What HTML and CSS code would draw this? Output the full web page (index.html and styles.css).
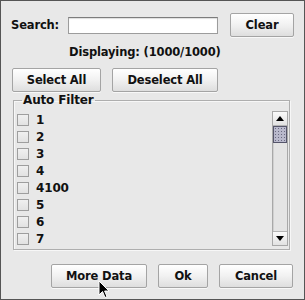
FILE: index.html
```html
<!DOCTYPE html>
<html lang="en">
<head>
    <meta charset="UTF-8">
    <title>Auto Filter</title>
    <link rel="stylesheet" href="styles.css">
</head>
<body>
    <div class="window">
        <div class="search-row">
            <label class="search-label" for="search">Search:</label>
            <input type="text" id="search" class="search-input">
            <button class="btn btn-clear">Clear</button>
        </div>
        <div class="status">Displaying: (1000/1000)</div>
        <div class="select-row">
            <button class="btn btn-select">Select All</button>
            <button class="btn btn-deselect">Deselect All</button>
        </div>
        <fieldset class="group">
            <legend>Auto Filter</legend>
            <div class="group-body">
                <ul class="items">
                    <li><span class="box"></span>1</li>
                    <li><span class="box"></span>2</li>
                    <li><span class="box"></span>3</li>
                    <li><span class="box"></span>4</li>
                    <li><span class="box"></span>4100</li>
                    <li><span class="box"></span>5</li>
                    <li><span class="box"></span>6</li>
                    <li><span class="box"></span>7</li>
                </ul>
                <div class="scrollbar">
                    <div class="arrow arrow-up"></div>
                    <div class="track"><div class="thumb"></div></div>
                    <div class="arrow arrow-down"></div>
                </div>
            </div>
        </fieldset>
        <div class="actions">
            <button class="btn btn-more">More Data</button>
            <button class="btn btn-ok">Ok</button>
            <button class="btn btn-cancel">Cancel</button>
        </div>
        <svg class="cursor" width="12" height="19" viewBox="0 0 12 19">
            <path d="M1 1 L1 15 L4.5 11.5 L7 17.5 L9 16.6 L6.6 11 L11 11 Z" fill="#000" stroke="#fff" stroke-width="1"/>
        </svg>
    </div>
</body>
</html>
```

FILE: styles.css
```css
body {margin: 0; background: #e8e8e8; font-family: "DejaVu Sans", Verdana, sans-serif; font-size: 11.5px; letter-spacing: -0.15px; font-weight: bold; color: #111;}
.window {width: 305px; height: 300px; box-sizing: border-box; border: 1px solid #555; background: #e8e8e8; padding: 12px 10px 0 10px; position: relative;}

.btn {height: 24px; box-sizing: border-box; border: 1px solid #a4a4a4; border-radius: 2px; background: linear-gradient(to bottom, #ffffff, #f1f1f1 50%, #dedede); font: inherit; letter-spacing: inherit; color: #111; padding: 0; box-shadow: 0 1px 0 #f8f8f8;}

.search-row {display: flex; align-items: center; height: 24px;}
.search-label {width: 58px;}
.search-input {width: 150px; height: 17px; box-sizing: border-box; border: 1px solid #9c9c9c; border-top-color: #7c7c7c; background: #fff; margin: 0; padding: 0; box-shadow: inset 0 1px 1px #ddd;}
.btn-clear {width: 65px; margin-left: 12px;}

.status {margin: 7px 0 0 58px; line-height: 16px;}

.select-row {display: flex; gap: 11px; margin: 8px 0 0 1px;}
.btn-select {width: 89px;}
.btn-deselect {width: 106px;}

.group {margin: 0 4px 0 2px; padding: 0 1px 3px 3px; border: 1px solid #aeaeae; box-shadow: inset 1px 1px 0 #f7f7f7, 1px 1px 0 #f7f7f7; min-width: 0;}
.group legend {padding: 0 1px; margin-left: 5px; line-height: 16px; font-size: 12px;}
.group-body {display: flex; height: 135px; margin-top: 3px;}

.items {list-style: none; margin: 0; padding: 0; flex: 1; overflow: hidden;}
.items li {display: flex; align-items: center; height: 17px; font-size: 12px;}
.box {width: 12px; height: 12px; box-sizing: border-box; border: 1px solid #9e9e9e; background: linear-gradient(to bottom, #f0f0f0, #e2e2e2); margin-right: 7px;}

.scrollbar {width: 16px; display: flex; flex-direction: column; border: 1px solid #a8a8a8; box-sizing: border-box; background: #e4e4e4;}
.arrow {height: 13px; background: linear-gradient(to bottom, #fafafa, #e2e2e2); display: flex; align-items: center; justify-content: center;}
.arrow-up {border-bottom: 1px solid #b4b4b4;}
.arrow-down {border-top: 1px solid #b4b4b4;}
.arrow-up::after {content: ""; border-left: 4px solid transparent; border-right: 4px solid transparent; border-bottom: 5px solid #000;}
.arrow-down::after {content: ""; border-left: 4px solid transparent; border-right: 4px solid transparent; border-top: 5px solid #000;}
.track {flex: 1; border-left: 1px solid #d0d0d0;}
.thumb {height: 17px; margin-left: -1px; box-sizing: border-box; border: 1px solid #55556a; background-color: #b9b9cc; background-image: radial-gradient(circle, #6a6a80 0.6px, transparent 0.9px); background-size: 3px 3px;}

.actions {display: flex; justify-content: flex-end; gap: 11px; margin: 14px 1px 0 0;}
.btn-more {width: 96px;}
.btn-ok {width: 50px;}
.btn-cancel {width: 74px;}

.cursor {position: absolute; left: 97px; top: 279px;}
```
